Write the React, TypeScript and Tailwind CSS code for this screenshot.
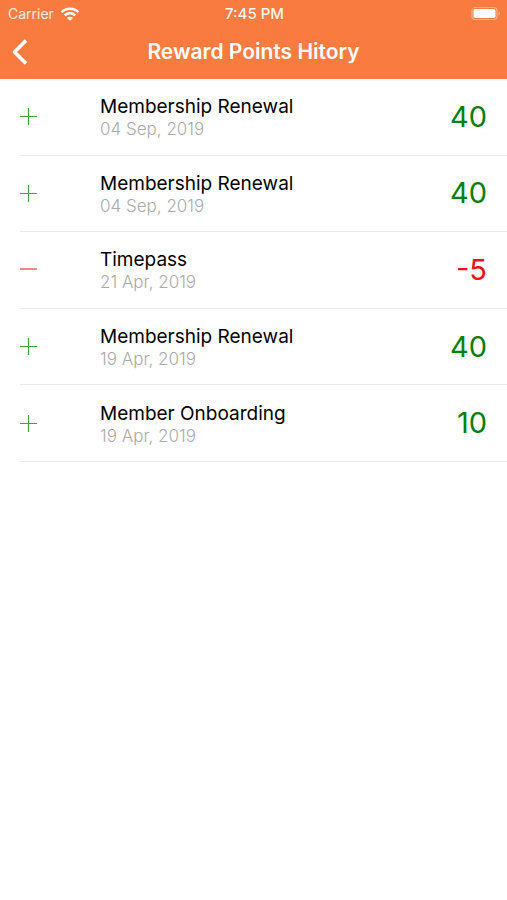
import clsx from "clsx";

type Entry = {
  id: number;
  title: string;
  date: string;
  points: number;
};

const entries: Entry[] = [
  { id: 1, title: "Membership Renewal", date: "04 Sep, 2019", points: 40 },
  { id: 2, title: "Membership Renewal", date: "04 Sep, 2019", points: 40 },
  { id: 3, title: "Timepass", date: "21 Apr, 2019", points: -5 },
  { id: 4, title: "Membership Renewal", date: "19 Apr, 2019", points: 40 },
  { id: 5, title: "Member Onboarding", date: "19 Apr, 2019", points: 10 },
];

function WifiIcon() {
  return (
    <svg width="20" height="14" viewBox="0 0 20 14" fill="none" stroke="white" strokeWidth="2.3" aria-hidden="true">
      <path d="M1.5 5.2C6.2.6 13.8.6 18.5 5.2" />
      <path d="M4.7 8.4c3-2.9 7.6-2.9 10.6 0" />
      <path d="M10 13.8 7 10.9c1.7-1.5 4.3-1.5 6 0z" fill="white" stroke="none" />
    </svg>
  );
}

function BatteryIcon() {
  return (
    <svg width="30" height="14" viewBox="0 0 30 14" fill="none" aria-hidden="true">
      <rect x="1" y="0.5" width="25" height="12" rx="3.5" stroke="white" strokeOpacity=".4" strokeWidth="1.2" />
      <rect x="2.5" y="2" width="22" height="9" rx="1.8" fill="white" />
      <path d="M27.6 4.5v4c1.8-.5 1.8-3.5 0-4z" fill="white" fillOpacity=".45" />
    </svg>
  );
}

function SignIcon({ positive }: { positive: boolean }) {
  return (
    <svg width="17" height="17" viewBox="0 0 17 17" fill="none" aria-hidden="true">
      {positive ? (
        <path d="M0 8.5h17M8.5 0v17" stroke="#43a343" strokeWidth="1.2" />
      ) : (
        <path d="M0 8h17" stroke="#fb8682" strokeWidth="2" />
      )}
    </svg>
  );
}

function StatusBar() {
  return (
    <div className="grid h-7 grid-cols-3 items-center pl-2 pr-1.5">
      <div className="flex items-center gap-1.5 text-sm">
        <span className="text-white/85">Carrier</span>
        <WifiIcon />
      </div>
      <span className="text-center text-[15px] leading-5 font-medium text-white/95">7:45 PM</span>
      <div className="flex justify-end">
        <BatteryIcon />
      </div>
    </div>
  );
}

function EntryRow({ entry }: { entry: Entry }) {
  const positive = entry.points > 0;

  return (
    <li className="flex items-center border-b border-[#e9e9e9] pr-5">
      <div className="w-20 shrink-0">
        <SignIcon positive={positive} />
      </div>
      <div className="min-w-0 flex-1">
        <h2 className="text-[19px] leading-[25px] text-black">{entry.title}</h2>
        <p className="text-[17px] font-light leading-5 text-[#aaaaaa]">{entry.date}</p>
      </div>
      <span className={clsx("text-[29px] leading-9", positive ? "text-[#078007]" : "text-[#ee1111]")}>
        {entry.points}
      </span>
    </li>
  );
}

export default function App() {
  return (
    <div className="min-h-screen bg-white font-['Inter',sans-serif]">
      <header className="bg-[#f97b3f] text-white">
        <StatusBar />
        <div className="grid h-[51px] grid-cols-[48px_1fr_48px] items-center pb-1">
          <button type="button" aria-label="Back" className="flex h-10 items-center pl-3">
            <svg width="16" height="26" viewBox="0 0 16 26" fill="none" stroke="white" strokeWidth="3.6" strokeLinejoin="round" aria-hidden="true">
              <path d="M14 1.5 2.5 13 14 24.5" />
            </svg>
          </button>
          <h1 className="text-center text-[21px] font-semibold leading-6">Reward Points Hitory</h1>
        </div>
      </header>
      <main>
        <ul className="grid h-[383px] auto-rows-fr pl-5">
          {entries.map((entry) => (
            <EntryRow key={entry.id} entry={entry} />
          ))}
        </ul>
      </main>
    </div>
  );
}
